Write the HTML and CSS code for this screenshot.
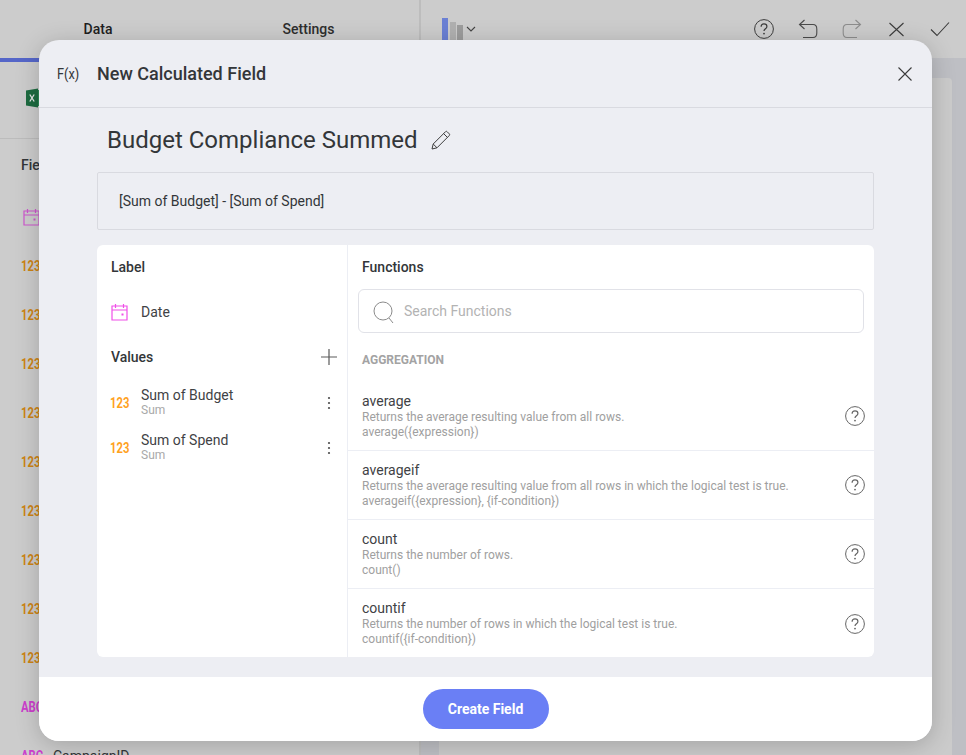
FILE: index.html
```html
<!DOCTYPE html>
<html lang="en">
<head>
    <meta charset="UTF-8">
    <meta name="viewport" content="width=device-width, initial-scale=1.0">
    <title>New Calculated Field</title>
    <link rel="stylesheet" href="styles.css">
</head>
<body>
    <svg class="defs" width="0" height="0">
        <symbol id="help" viewBox="0 0 20 20">
            <circle cx="10" cy="10" r="9.4" fill="none" stroke="currentColor" stroke-width="1"/>
            <path d="M7.1 7.7c0-1.8 1.3-2.9 2.9-2.9s2.9 1.1 2.9 2.7c0 2.3-2.9 2.3-2.9 4.6" fill="none" stroke="currentColor" stroke-width="1.2"/>
            <circle cx="10" cy="14.6" r=".9" fill="currentColor"/>
        </symbol>
        <symbol id="calendar" viewBox="0 0 17 18">
            <path d="M1 3h15v14H1zM1 7h15M4.5 1v4M12.5 1v4" fill="none" stroke="currentColor" stroke-width="1.2"/>
            <rect x="10.5" y="10.5" width="2" height="2" fill="currentColor"/>
        </symbol>
        <symbol id="dots" viewBox="0 0 4 14">
            <circle cx="2" cy="2" r="1.1" fill="currentColor"/>
            <circle cx="2" cy="7" r="1.1" fill="currentColor"/>
            <circle cx="2" cy="12" r="1.1" fill="currentColor"/>
        </symbol>
    </svg>

    <div class="app">
        <div class="side">
            <div class="tabs">
                <div class="tab tab-data">Data</div>
                <div class="tab tab-settings">Settings</div>
            </div>
            <div class="source">
                <svg class="excel" width="20" height="20" viewBox="0 0 20 20">
                    <rect x="6" y="2" width="13" height="16" fill="#2e8b57"/>
                    <path d="M0 2.5 12 .5v19L0 17.5z" fill="#1d6b40"/>
                    <path d="M3.8 6.500 8.200 13.500M8.200 6.500 3.800 13.500" stroke="#e8e8e8" stroke-width="1.300"/>
                </svg>
            </div>
            <div class="fields">
                <div class="fields-title">Fields</div>
                <div class="field field-date"><svg class="field-cal" width="17" height="18"><use href="#calendar"/></svg></div>
                <div class="field num"><span class="type">123</span></div>
                <div class="field num"><span class="type">123</span></div>
                <div class="field num"><span class="type">123</span></div>
                <div class="field num"><span class="type">123</span></div>
                <div class="field num"><span class="type">123</span></div>
                <div class="field num"><span class="type">123</span></div>
                <div class="field num"><span class="type">123</span></div>
                <div class="field num"><span class="type">123</span></div>
                <div class="field num"><span class="type">123</span></div>
                <div class="field abc"><span class="type">ABC</span></div>
                <div class="field abc"><span class="type">ABC</span><span class="field-name">CampaignID</span></div>
            </div>
        </div>
        <div class="main">
            <div class="toolbar">
                <div class="chart-pick">
                    <span class="bar bar-1"></span>
                    <span class="bar bar-2"></span>
                    <span class="bar bar-3"></span>
                    <svg class="chev" width="10" height="6" viewBox="0 0 10 6"><path d="M1 1l4 4 4-4" fill="none" stroke="#444" stroke-width="1.1"/></svg>
                </div>
                <div class="tools">
                    <svg width="20" height="20"><use href="#help"/></svg>
                    <svg width="20" height="20" viewBox="0 0 20 20"><path d="M6.5 1 1.5 5.5l5 4.5M1.5 5.5H15c2.6 0 3.8 1.6 3.8 4.5v4c0 2.900-1.200 4.500-3.800 4.500H5" fill="none" stroke="#4a4a4a" stroke-width="1.1"/></svg>
                    <svg class="tool-off" width="20" height="20" viewBox="0 0 20 20"><path d="M13.500 1l5 4.500-5 4.500M18.500 5.500H5C2.400 5.500 1.200 7.100 1.200 10v4c0 2.900 1.200 4.500 3.800 4.500h10" fill="none" stroke="#8d8d8d" stroke-width="1.1"/></svg>
                    <svg width="20" height="20" viewBox="0 0 20 20"><path d="M3.500 4l14 13M17.500 4l-14 13" fill="none" stroke="#3c3c3c" stroke-width="1.1"/></svg>
                    <svg width="20" height="20" viewBox="0 0 20 20"><path d="M1 10.500l6 6L19 3.500" fill="none" stroke="#3c3c3c" stroke-width="1.1"/></svg>
                </div>
            </div>
            <div class="canvas">
                <div class="canvas-card"></div>
            </div>
        </div>
    </div>

    <div class="modal">
        <div class="modal-head">
            <span class="fx">F(x)</span>
            <span class="modal-title">New Calculated Field</span>
            <svg class="close" width="16" height="16" viewBox="0 0 16 16"><path d="M1.500 1.500l13 13M14.500 1.500l-13 13" fill="none" stroke="#3c3c3c" stroke-width="1.1"/></svg>
        </div>
        <div class="modal-body">
            <div class="name-row">
                <span class="field-title">Budget Compliance Summed</span>
                <svg width="20" height="20" viewBox="0 0 20 20"><path d="M1 19l1.200-5L14.500 1.700c.5-.5 1.100-.5 1.600 0l2.200 2.200c.5.500.5 1.100 0 1.600L6 17.800zM2.200 14L6 17.800M12.600 3.600l3.800 3.800" fill="none" stroke="#3c3c3c" stroke-width="1"/></svg>
            </div>
            <div class="formula">[Sum of Budget] - [Sum of Spend]</div>
            <div class="panels">
                <div class="left-panel">
                    <div class="panel-title">Label</div>
                    <div class="date-row">
                        <svg class="pink" width="17" height="18"><use href="#calendar"/></svg>
                        <span>Date</span>
                    </div>
                    <div class="values-head">
                        <div class="panel-title">Values</div>
                        <svg width="18" height="18" viewBox="0 0 18 18"><path d="M9 1v16M1 9h16" fill="none" stroke="#5a5a5a" stroke-width="1.200"/></svg>
                    </div>
                    <div class="value-list">
                        <div class="value-row">
                            <span class="value-type">123</span>
                            <div class="value-text">
                                <div class="value-name">Sum of Budget</div>
                                <div class="value-sub">Sum</div>
                            </div>
                            <svg class="value-dots" width="4" height="14"><use href="#dots"/></svg>
                        </div>
                        <div class="value-row">
                            <span class="value-type">123</span>
                            <div class="value-text">
                                <div class="value-name">Sum of Spend</div>
                                <div class="value-sub">Sum</div>
                            </div>
                            <svg class="value-dots" width="4" height="14"><use href="#dots"/></svg>
                        </div>
                    </div>
                </div>
                <div class="right-panel">
                    <div class="panel-title">Functions</div>
                    <div class="search">
                        <svg width="22" height="24" viewBox="0 0 22 24"><circle cx="10" cy="12" r="9" fill="none" stroke="#8b8b8b" stroke-width="1"/><path d="M16 19l4 5" fill="none" stroke="#8b8b8b" stroke-width="1"/></svg>
                        <span>Search Functions</span>
                    </div>
                    <div class="group">AGGREGATION</div>
                    <div class="fn">
                        <div class="fn-text">
                            <div class="fn-name">average</div>
                            <div class="fn-desc">Returns the average resulting value from all rows.</div>
                            <div class="fn-desc">average({expression})</div>
                        </div>
                        <svg class="fn-help" width="20" height="20"><use href="#help"/></svg>
                    </div>
                    <div class="fn">
                        <div class="fn-text">
                            <div class="fn-name">averageif</div>
                            <div class="fn-desc">Returns the average resulting value from all rows in which the logical test is true.</div>
                            <div class="fn-desc">averageif({expression}, {if-condition})</div>
                        </div>
                        <svg class="fn-help" width="20" height="20"><use href="#help"/></svg>
                    </div>
                    <div class="fn">
                        <div class="fn-text">
                            <div class="fn-name">count</div>
                            <div class="fn-desc">Returns the number of rows.</div>
                            <div class="fn-desc">count()</div>
                        </div>
                        <svg class="fn-help" width="20" height="20"><use href="#help"/></svg>
                    </div>
                    <div class="fn">
                        <div class="fn-text">
                            <div class="fn-name">countif</div>
                            <div class="fn-desc">Returns the number of rows in which the logical test is true.</div>
                            <div class="fn-desc">countif({if-condition})</div>
                        </div>
                        <svg class="fn-help" width="20" height="20"><use href="#help"/></svg>
                    </div>
                </div>
            </div>
        </div>
        <div class="modal-foot">
            <button type="button" class="create">Create Field</button>
        </div>
    </div>
</body>
</html>
```

FILE: styles.css
```css
* {
    box-sizing: border-box;
}
body {
    font-family: Roboto, "Liberation Sans", sans-serif;
    margin: 0;
    height: 755px;
    overflow: hidden;
    background: #cccccc;
    color: #333639;
}
.defs {
    position: absolute;
}
.app {
    display: flex;
    height: 755px;
    overflow: hidden;
}

/* left side, behind the dialog */
.side {
    width: 419px;
    flex-shrink: 0;
}
.tabs {
    display: grid;
    grid-template-columns: 196px 225px;
    height: 58px;
}
.tab {
    text-align: center;
    font-size: 14px;
    line-height: 58px;
}
.tab-data {
    font-weight: 500;
    color: #1f1f1f;
    border-bottom: 4px solid #5566c8;
}
.tab-settings {
    color: #2e2e2e;
    font-weight: 500;
}
.source {
    height: 81px;
    padding: 30px 0 0 26px;
    border-bottom: 1px solid #bcbcbc;
}
.excel {
    display: block;
}
.fields {
    padding-left: 21px;
}
.fields-title {
    font-size: 14px;
    font-weight: 500;
    height: 54px;
    padding-top: 18px;
}
.field {
    height: 49px;
    font-size: 15px;
    font-weight: 700;
    line-height: 49px;
    white-space: nowrap;
}
.field-date {
    padding: 15px 0 0 2px;
}
.field-cal {
    color: #cc55cc;
    display: block;
}
.type {
    display: inline-block;
    width: 32px;
    transform: scaleX(0.75);
    transform-origin: left center;
}
.num {
    color: #cc8414;
}
.abc {
    color: #cc3fcc;
}
.field-name {
    color: #333639;
    font-size: 14px;
    font-weight: 400;
}

/* toolbar and canvas */
.main {
    flex: 1;
    border-left: 2px solid #bdbdbd;
}
.toolbar {
    height: 58px;
    display: flex;
    justify-content: space-between;
    padding-left: 21px;
}
.chart-pick {
    display: flex;
    align-items: flex-start;
    gap: 1.5px;
    padding-top: 18px;
}
.bar {
    width: 6px;
    height: 40px;
}
.bar-1 {
    background: #6b80d4;
}
.bar-2 {
    background: #b0b0b0;
    margin-top: 4px;
}
.bar-3 {
    background: #9c9c9c;
    margin-top: 7px;
}
.chev {
    margin: 8px 0 0 1px;
}
.tools {
    display: flex;
    gap: 24px;
    padding: 19px 16px 0 0;
    color: #3c3c3c;
}
.canvas {
    height: 697px;
    background: #bebfc4;
    padding: 20px 14px 0 18px;
}
.canvas-card {
    height: 100%;
    background: #cbcbcb;
    border-radius: 4px 4px 0 0;
}

/* dialog */
.modal {
    position: absolute;
    left: 39px;
    top: 40px;
    width: 893px;
    height: 701px;
    background: #edeef3;
    border-radius: 20px;
    box-shadow: 0 4px 24px rgba(0, 0, 0, 0.2);
    display: flex;
    flex-direction: column;
    overflow: hidden;
}
.modal-head {
    height: 68px;
    flex-shrink: 0;
    display: flex;
    align-items: center;
    border-bottom: 1px solid #d9dae0;
    padding: 0 19px 0 18px;
}
.fx {
    width: 40px;
    font-size: 15px;
    transform: scaleX(0.85);
    transform-origin: left center;
}
.modal-title {
    flex: 1;
    font-size: 18px;
    font-weight: 500;
}
.modal-body {
    flex: 1;
    padding: 0 58px;
}
.name-row {
    display: flex;
    align-items: center;
    gap: 13px;
    height: 64px;
    padding-left: 10px;
}
.field-title {
    font-size: 24px;
}
.formula {
    height: 58px;
    border: 1px solid #d9dae0;
    border-radius: 2px;
    font-size: 14px;
    line-height: 57px;
    padding-left: 21px;
}
.panels {
    display: flex;
    height: 412px;
    margin-top: 15px;
    background: #ffffff;
    border-radius: 6px;
    overflow: hidden;
}
.panel-title {
    font-size: 14px;
    font-weight: 500;
}
.left-panel {
    width: 251px;
    padding: 14px 14px 0;
    border-right: 1px solid #eceef4;
}
.date-row {
    display: flex;
    align-items: center;
    gap: 13px;
    margin-top: 28px;
    font-size: 14px;
    color: #3f4245;
}
.pink {
    color: #f04fe8;
}
.values-head {
    display: flex;
    justify-content: space-between;
    align-items: center;
    margin: 27px -5px 0 0;
    height: 18px;
}
.value-list {
    margin-top: 14px;
}
.value-row {
    display: flex;
    align-items: center;
    height: 45px;
}
.value-type {
    width: 31px;
    margin-left: -1px;
    font-size: 15px;
    font-weight: 700;
    color: #ffa21f;
    transform: scaleX(0.75);
    transform-origin: left center;
}
.value-text {
    flex: 1;
}
.value-name {
    font-size: 14px;
    line-height: 16px;
    color: #3f4245;
}
.value-sub {
    font-size: 12px;
    line-height: 15px;
    color: #a9a9a9;
}
.value-dots {
    color: #4d4d4d;
    margin-right: 2px;
}
.right-panel {
    flex: 1;
    padding-top: 14px;
}
.right-panel > .panel-title {
    padding-left: 14px;
}
.search {
    display: flex;
    align-items: center;
    gap: 9px;
    height: 44px;
    margin: 14px 10px 0;
    padding-left: 14px;
    border: 1px solid #e1e2e8;
    border-radius: 6px;
    font-size: 14px;
    color: #b3b3b3;
}
.group {
    font-size: 12px;
    font-weight: 700;
    color: #a3a3a3;
    margin: 20px 0 0 14px;
    height: 29px;
}
.fn {
    display: flex;
    align-items: center;
    height: 69px;
    padding: 0 9px 0 14px;
    border-bottom: 1px solid #eceef4;
}
.fn:last-child {
    border-bottom: 0;
}
.fn-text {
    flex: 1;
    padding-top: 1px;
}
.fn-name {
    font-size: 14px;
    line-height: 14px;
    margin-bottom: 2px;
    color: #3f4245;
}
.fn-desc {
    font-size: 12px;
    line-height: 15px;
    color: #a0a0a0;
}
.fn-help {
    color: #666666;
}
.modal-foot {
    height: 64px;
    flex-shrink: 0;
    background: #ffffff;
    display: flex;
    justify-content: center;
    align-items: center;
}
.create {
    width: 126px;
    height: 40px;
    border: none;
    border-radius: 20px;
    background: #6a7ff5;
    color: #ffffff;
    font-family: inherit;
    font-size: 14px;
    font-weight: 700;
}
```
